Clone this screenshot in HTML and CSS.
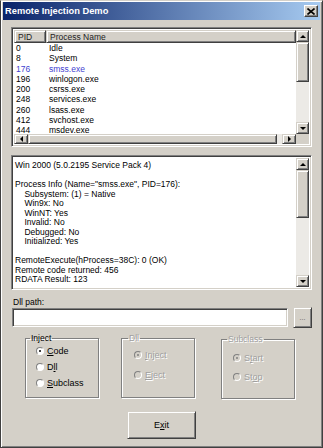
FILE: index.html
```html
<!DOCTYPE html>
<html lang="en">
<head>
  <meta charset="UTF-8" />
  <title>Remote Injection Demo</title>
  <link rel="stylesheet" href="styles.css">
</head>
<body>
  <div class="window">
    <div class="titlebar">
      <span class="title">Remote Injection Demo</span>
      <span class="close">
        <svg width="8" height="7" viewBox="0 0 8 7"><path d="M0.5 0.5 L7.5 6.5 M7.5 0.5 L0.5 6.5" stroke="#000" stroke-width="1.6"/></svg>
      </span>
    </div>

    <div class="content">
      <!-- process list -->
      <div class="sunken listview">
        <div class="list-main">
          <div class="list-header">
            <div class="hcell pid">PID</div>
            <div class="hcell name">Process Name</div>
          </div>
          <div class="rows">
            <div class="row"><span class="pid">0</span><span>Idle</span></div>
            <div class="row"><span class="pid">8</span><span>System</span></div>
            <div class="row sel"><span class="pid">176</span><span>smss.exe</span></div>
            <div class="row"><span class="pid">196</span><span>winlogon.exe</span></div>
            <div class="row"><span class="pid">200</span><span>csrss.exe</span></div>
            <div class="row"><span class="pid">248</span><span>services.exe</span></div>
            <div class="row"><span class="pid">260</span><span>lsass.exe</span></div>
            <div class="row"><span class="pid">412</span><span>svchost.exe</span></div>
            <div class="row"><span class="pid">444</span><span>msdev.exe</span></div>
          </div>
        </div>
        <div class="vscroll">
          <div class="sb-btn"><i class="tri up"></i></div>
          <div class="sb-thumb list-vthumb"></div>
          <div class="sb-track"></div>
          <div class="sb-btn"><i class="tri down"></i></div>
        </div>
        <div class="hscroll">
          <div class="sb-btn"><i class="tri left"></i></div>
          <div class="sb-thumb list-hthumb"></div>
          <div class="sb-track"></div>
          <div class="sb-btn"><i class="tri right"></i></div>
        </div>
        <div class="corner"></div>
      </div>

      <!-- output box -->
      <div class="sunken output">
        <div class="output-text">Win 2000 (5.0.2195 Service Pack 4)

Process Info (Name="smss.exe", PID=176):
    Subsystem: (1) = Native
    Win9x: No
    WinNT: Yes
    Invalid: No
    Debugged: No
    Initialized: Yes

RemoteExecute(hProcess=38C): 0 (OK)
Remote code returned: 456
RDATA Result: 123</div>
        <div class="vscroll">
          <div class="sb-btn"><i class="tri up"></i></div>
          <div class="sb-thumb out-thumb"></div>
          <div class="sb-track"></div>
          <div class="sb-btn"><i class="tri down"></i></div>
        </div>
      </div>

      <div class="label">Dll path:</div>
      <div class="path-row">
        <div class="sunken path-input"></div>
        <div class="button browse">...</div>
      </div>

      <div class="groups">
        <fieldset class="group inject">
          <legend>Inject</legend>
          <div class="radio-item"><i class="radio on"></i><span><u>C</u>ode</span></div>
          <div class="radio-item"><i class="radio"></i><span>D<u>l</u>l</span></div>
          <div class="radio-item"><i class="radio"></i><span><u>S</u>ubclass</span></div>
        </fieldset>
        <fieldset class="group disabled dll">
          <legend>Dll</legend>
          <div class="radio-item"><i class="radio on"></i><span><u>I</u>nject</span></div>
          <div class="radio-item"><i class="radio"></i><span><u>E</u>ject</span></div>
        </fieldset>
        <fieldset class="group disabled subclass">
          <legend>Subclass</legend>
          <div class="radio-item"><i class="radio on"></i><span>S<u>t</u>art</span></div>
          <div class="radio-item"><i class="radio"></i><span>St<u>o</u>p</span></div>
        </fieldset>
      </div>

      <div class="exit-row">
        <div class="button exit">E<u>x</u>it</div>
      </div>
    </div>
  </div>
</body>
</html>
```

FILE: styles.css
```css
body {
  margin: 0;
  background: #d4d0c8;
  font-family: 'Liberation Sans', Arial, sans-serif;
  font-size: 8.5px;
  color: #000;
}
.window {
  width: 323px;
  height: 448px;
  box-sizing: border-box;
  border: 1px solid #404040;
  border-top-color: #d4d0c8;
  border-left-color: #404040;
  box-shadow: inset 1px 1px 0 #fff, inset -1px -1px 0 #808080;
  padding: 1px 2px 2px 2px;
  background: #d4d0c8;
  display: flex;
  flex-direction: column;
}
.titlebar {
  height: 18px;
  background: linear-gradient(to right, #0a246a, #a6caf0);
  display: flex;
  align-items: center;
  justify-content: space-between;
  padding: 0 2px 0 2px;
}
.title {
  color: #fff;
  font-weight: bold;
  font-size: 9.3px;
}
.close {
  width: 14px;
  height: 12px;
  box-sizing: border-box;
  background: #d4d0c8;
  border: 1px solid;
  border-color: #fff #404040 #404040 #fff;
  box-shadow: inset -1px -1px 0 #808080;
  display: flex;
  align-items: center;
  justify-content: center;
}
.content {
  padding: 7px 8px 0 8px;
  display: flex;
  flex-direction: column;
}

/* 3d borders */
.sunken {
  box-sizing: border-box;
  border: 1px solid;
  border-color: #808080 #fff #fff #808080;
  box-shadow: inset 1px 1px 0 #404040, inset -1px -1px 0 #d4d0c8;
  background: #fff;
  padding: 2px;
}
.sb-btn, .sb-thumb, .hcell, .button {
  box-sizing: border-box;
  border: 1px solid;
  border-color: #d4d0c8 #404040 #404040 #d4d0c8;
  box-shadow: inset 1px 1px 0 #fff, inset -1px -1px 0 #808080;
  background: #d4d0c8;
}

/* list view */
.listview {
  width: 301px;
  height: 120px;
  display: grid;
  grid-template-columns: 1fr 13px;
  grid-template-rows: 1fr 10px;
}
.list-main {
  overflow: hidden;
}
.list-header {
  display: flex;
  height: 13px;
}
.hcell {
  display: flex;
  align-items: center;
  padding-left: 3px;
  color: #222;
}
.hcell.pid { width: 32px; }
.hcell.name { flex: 1; }
.row {
  display: flex;
  height: 10.3px;
  line-height: 10.3px;
  padding-left: 2px;
}
.row .pid { width: 33px; }
.row.sel { color: #3f3fd0; }

/* scrollbars */
.vscroll {
  display: flex;
  flex-direction: column;
}
.hscroll {
  display: flex;
}
.sb-btn {
  width: 13px;
  height: 12px;
  display: flex;
  align-items: center;
  justify-content: center;
  flex: none;
}
.hscroll .sb-btn {
  height: 10px;
  width: 14px;
}
.sb-track {
  flex: 1;
  background-color: #eceae6;
}
.sb-thumb {
  flex: none;
}
.list-vthumb { height: 40px; }
.list-hthumb { width: 249px; }
.out-thumb { height: 48px; }
.corner {
  background: #d4d0c8;
}
.tri {
  width: 0;
  height: 0;
  border: 3px solid transparent;
}
.tri.up { border-bottom: 3px solid #000; border-top-width: 0; }
.tri.down { border-top: 3px solid #000; border-bottom-width: 0; }
.tri.left { border-right: 3px solid #000; border-left-width: 0; }
.tri.right { border-left: 3px solid #000; border-right-width: 0; }

/* output box */
.output {
  margin-top: 8px;
  width: 301px;
  height: 135px;
  display: flex;
}
.output-text {
  flex: 1;
  white-space: pre;
  line-height: 9.5px;
  padding: 3px 0 0 1px;
  overflow: hidden;
}

/* dll path */
.label {
  margin-top: 7px;
  padding-left: 2px;
  height: 10px;
  line-height: 10px;
}
.path-row {
  display: flex;
  align-items: center;
  width: 301px;
}
.path-input {
  width: 276px;
  height: 19px;
  margin-left: 1px;
}
.browse {
  margin-left: auto;
  width: 19px;
  height: 21px;
  display: flex;
  align-items: center;
  justify-content: center;
  color: #555;
  font-size: 7px;
}

/* groups */
.groups {
  margin-top: 5px;
  display: flex;
  align-items: flex-start;
  padding-left: 14px;
}
.group {
  margin: 0;
  padding: 0 0 0 10px;
  height: 65px;
  width: 74px;
  box-sizing: border-box;
  border: 1px solid #808080;
  box-shadow: 1px 1px 0 #fff, inset 1px 1px 0 #fff;
}
.group legend {
  padding: 0 1px;
  margin-left: -6px;
  font-size: 8.5px;
  line-height: 10px;
}
.group.dll { margin-left: 22px; padding-left: 12px; }
.group.subclass { margin-left: 26px; margin-top: 1px; padding-left: 11px; }
.group.disabled { color: #a0a0a0; }
.group.disabled legend { text-shadow: 1px 1px 0 #fff; }
.radio-item {
  display: flex;
  align-items: center;
  gap: 3px;
  font-size: 9px;
}
.inject .radio-item { height: 16px; }
.dll .radio-item { height: 20px; }
.dll .radio-item:first-of-type { margin-top: 2px; }
.subclass .radio-item { height: 19px; }
.subclass .radio-item:first-of-type { margin-top: 4px; }
.group.disabled .radio-item span { text-shadow: 1px 1px 0 #fff; }
.radio {
  width: 8px;
  height: 8px;
  box-sizing: border-box;
  border-radius: 50%;
  border: 1px solid;
  border-color: #808080 #fff #fff #808080;
  background: #fff;
  position: relative;
}
.radio.on::after {
  content: '';
  position: absolute;
  left: 2px;
  top: 2px;
  width: 2px;
  height: 2px;
  border-radius: 50%;
  background: #000;
}
.disabled .radio { background: #d4d0c8; }
.disabled .radio.on::after { background: #808080; }

/* exit */
.exit-row {
  margin-top: 12px;
  padding-left: 116px;
}
.exit {
  width: 69px;
  height: 28px;
  display: flex;
  align-items: center;
  justify-content: center;
  font-size: 9px;
}
```
